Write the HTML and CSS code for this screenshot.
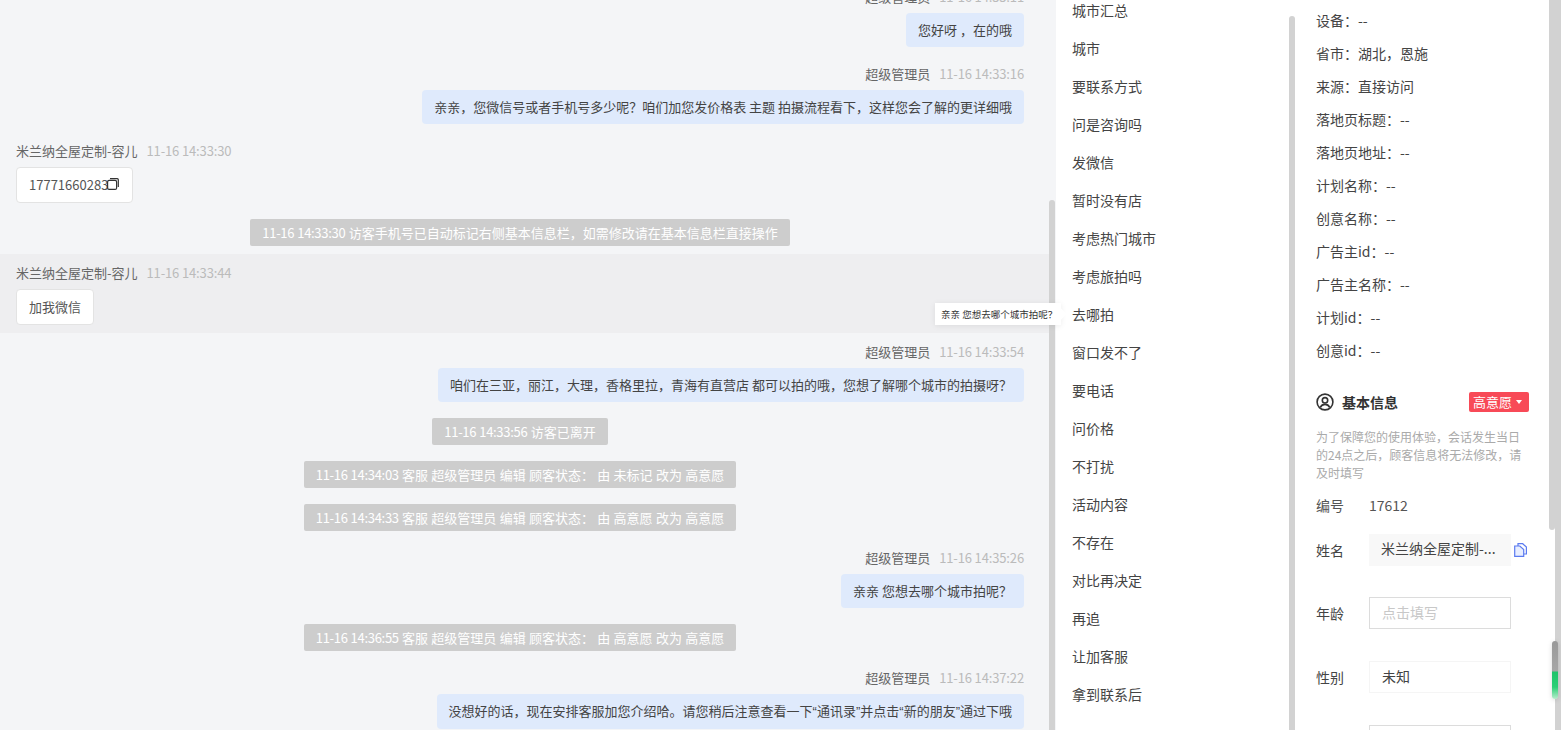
FILE: index.html
```html
<!DOCTYPE html>
<html>
<head>
  <title>会话详情</title>
  <link rel="stylesheet" href="styles.css">
</head>
<body>
  <div class="page">
    <!-- chat log -->
    <div class="chat-panel">
      <div class="chat-scroll">
        <div class="msg msg-right">
          <div class="msg-meta"><span class="msg-name">超级管理员</span><span class="msg-time">11-16 14:33:11</span></div>
          <div class="bubble bubble-blue">您好呀 ，在的哦</div>
        </div>
        <div class="msg msg-right">
          <div class="msg-meta"><span class="msg-name">超级管理员</span><span class="msg-time">11-16 14:33:16</span></div>
          <div class="bubble bubble-blue">亲亲，您微信号或者手机号多少呢？咱们加您发价格表 主题 拍摄流程看下，这样您会了解的更详细哦</div>
        </div>
        <div class="msg">
          <div class="msg-meta"><span class="msg-name">米兰纳全屋定制-容儿</span><span class="msg-time">11-16 14:33:30</span></div>
          <div class="bubble bubble-white">17771660283<svg class="copy-icon" viewBox="0 0 12 12" width="12" height="12"><path d="M3 .7h7.300a1 1 0 0 1 1 1v7.300" fill="none" stroke="#333" stroke-width="1.200"/><rect x=".6" y="2.400" width="9" height="9" rx="1.500" fill="none" stroke="#333" stroke-width="1.200"/></svg></div>
        </div>
        <div class="sys-row"><span class="sys-note"><span class="sys-time">11-16 14:33:30</span> 访客手机号已自动标记右侧基本信息栏，如需修改请在基本信息栏直接操作</span></div>
        <div class="msg msg-hover">
          <div class="msg-meta"><span class="msg-name">米兰纳全屋定制-容儿</span><span class="msg-time">11-16 14:33:44</span></div>
          <div class="bubble bubble-white">加我微信</div>
        </div>
        <div class="msg msg-right">
          <div class="msg-meta"><span class="msg-name">超级管理员</span><span class="msg-time">11-16 14:33:54</span></div>
          <div class="bubble bubble-blue">咱们在三亚，丽江，大理，香格里拉，青海有直营店 都可以拍的哦，您想了解哪个城市的拍摄呀？</div>
        </div>
        <div class="sys-row"><span class="sys-note"><span class="sys-time">11-16 14:33:56</span> 访客已离开</span></div>
        <div class="sys-row"><span class="sys-note"><span class="sys-time">11-16 14:34:03</span> 客服 超级管理员 编辑 顾客状态： 由 未标记 改为 高意愿</span></div>
        <div class="sys-row"><span class="sys-note"><span class="sys-time">11-16 14:34:33</span> 客服 超级管理员 编辑 顾客状态： 由 高意愿 改为 高意愿</span></div>
        <div class="msg msg-right">
          <div class="msg-meta"><span class="msg-name">超级管理员</span><span class="msg-time">11-16 14:35:26</span></div>
          <div class="bubble bubble-blue">亲亲 您想去哪个城市拍呢？</div>
        </div>
        <div class="sys-row"><span class="sys-note"><span class="sys-time">11-16 14:36:55</span> 客服 超级管理员 编辑 顾客状态： 由 高意愿 改为 高意愿</span></div>
        <div class="msg msg-right">
          <div class="msg-meta"><span class="msg-name">超级管理员</span><span class="msg-time">11-16 14:37:22</span></div>
          <div class="bubble bubble-blue">没想好的话，现在安排客服加您介绍哈。请您稍后注意查看一下<span class="quote">“</span>通讯录<span class="quote">”</span>并点击<span class="quote">“</span>新的朋友<span class="quote">”</span>通过下哦</div>
        </div>
      </div>
      <div class="scroll-thumb chat-thumb"></div>
      <div class="tip">亲亲 您想去哪个城市拍呢？</div>
    </div>

    <!-- quick reply tags -->
    <div class="tag-panel">
      <ul class="tag-list">
        <li>城市汇总</li>
        <li>城市</li>
        <li>要联系方式</li>
        <li>问是咨询吗</li>
        <li>发微信</li>
        <li>暂时没有店</li>
        <li>考虑热门城市</li>
        <li>考虑旅拍吗</li>
        <li>去哪拍</li>
        <li>窗口发不了</li>
        <li>要电话</li>
        <li>问价格</li>
        <li>不打扰</li>
        <li>活动内容</li>
        <li>不存在</li>
        <li>对比再决定</li>
        <li>再追</li>
        <li>让加客服</li>
        <li>拿到联系后</li>
      </ul>
      <div class="scroll-thumb tag-thumb"></div>
    </div>

    <!-- visitor info -->
    <div class="info-panel">
      <ul class="info-list">
        <li>设备：--</li>
        <li>省市：湖北，恩施</li>
        <li>来源：直接访问</li>
        <li>落地页标题：--</li>
        <li>落地页地址：--</li>
        <li>计划名称：--</li>
        <li>创意名称：--</li>
        <li>广告主id：--</li>
        <li>广告主名称：--</li>
        <li>计划id：--</li>
        <li>创意id：--</li>
      </ul>
      <div class="info-head">
        <svg class="user-icon" viewBox="0 0 18 18" width="18" height="18"><circle cx="9" cy="9" r="7.900" fill="none" stroke="#333" stroke-width="1.600"/><circle cx="9" cy="7.300" r="2.700" fill="none" stroke="#333" stroke-width="1.600"/><path d="M4.300 14.400c1-2.100 2.700-3 4.700-3s3.700.9 4.700 3" fill="none" stroke="#333" stroke-width="1.600"/></svg>
        <span class="info-title">基本信息</span>
        <span class="status-tag">高意愿<i class="caret"></i></span>
      </div>
      <p class="info-tip">为了保障您的使用体验，会话发生当日的24点之后，顾客信息将无法修改，请及时填写</p>
      <div class="field field-plain"><label>编号</label><span>17612</span></div>
      <div class="field field-name">
        <label>姓名</label>
        <div class="field-box box-grey">米兰纳全屋定制-...</div>
        <svg class="file-icon" viewBox="0 0 13 14" width="13" height="14"><path d="M4 3V.7h4.700l3.700 3.400V11H10" fill="none" stroke="#5b7bf0" stroke-width="1.200"/><path d="M.7 3h5.100l3.900 3.500v6.800H.7z" fill="#e8eeff" stroke="#5b7bf0" stroke-width="1.200"/></svg>
      </div>
      <div class="field"><label>年龄</label><div class="field-box box-input">点击填写</div></div>
      <div class="field"><label>性别</label><div class="field-box box-line">未知</div></div>
      <div class="field"><label></label><div class="field-box box-input"></div></div>
      <div class="scroll-thumb info-thumb"></div>
      <div class="page-scroll"></div>
      <div class="side-progress"></div>
    </div>
  </div>
</body>
</html>
```

FILE: styles.css
```css
html, body {
  margin: 0;
  height: 100%;
  overflow: hidden;
}
body {
  font-family: "Noto Sans CJK SC", "Noto Sans", sans-serif;
  font-size: 14px;
  color: #333;
  background-color: #fff;
}
ul {
  list-style: none;
  margin: 0;
  padding: 0;
}
.page {
  display: flex;
  height: 730px;
  overflow: hidden;
}

/* chat */
.chat-panel {
  position: relative;
  z-index: 1;
  width: 1056px;
  flex: none;
  background-color: #f4f5f7;
}
.chat-scroll {
  margin-top: -22px;
  width: 1050px;
}
.msg {
  padding: 9px 26px 8px 16px;
  display: flex;
  flex-direction: column;
  align-items: flex-start;
}
.msg-right {
  align-items: flex-end;
}
.msg-meta {
  font-size: 13px;
  line-height: 20px;
  color: #666;
  margin-bottom: 6px;
}
.msg-time {
  color: #bbb;
  margin-left: 9px;
  letter-spacing: -0.14px;
}
.bubble {
  font-size: 13px;
  line-height: 20px;
  padding: 7px 12px;
  border-radius: 4px;
  color: #444;
  white-space: nowrap;
}
.bubble-blue {
  background-color: #dfeafc;
}
.bubble-white {
  background-color: #fff;
  border: 1px solid #e3e3e3;
  color: #555;
  display: flex;
  align-items: center;
}
.quote {
  font-family: "Liberation Sans", sans-serif;
}
.copy-icon {
  flex: none;
  margin: -2px 1px 0 -1px;
}
.msg-hover {
  background-color: #eeeef0;
}
.sys-row {
  display: flex;
  justify-content: center;
  padding: 8px 10px 8px 0;
}
.sys-note {
  background-color: #cdcdcd;
  color: #fff;
  font-size: 13px;
  line-height: 27px;
  padding: 0 12px;
  border-radius: 2px;
  word-spacing: 0.4px;
}
.sys-time {
  letter-spacing: -0.3px;
}
.tip {
  position: absolute;
  left: 935px;
  top: 303px;
  height: 22px;
  line-height: 23px;
  padding: 0 4px 0 6px;
  font-size: 9.5px;
  color: #333;
  background-color: #fff;
  box-shadow: 0 1px 6px rgba(0, 0, 0, 0.08);
  white-space: nowrap;
}
.tip::after {
  content: "";
  position: absolute;
  right: -4px;
  top: 7px;
  width: 8px;
  height: 8px;
  background-color: #fff;
  transform: rotate(45deg);
}

/* scrollbars */
.scroll-thumb {
  position: absolute;
  width: 6px;
  background-color: #d2d2d2;
  border-radius: 3px 3px 0 0;
}
.chat-thumb {
  left: 1049px;
  top: 200px;
  bottom: 0;
}
.tag-thumb {
  left: 233px;
  top: 16px;
  bottom: 0;
}
.info-thumb {
  left: 253px;
  top: 0;
  height: 530px;
  border-radius: 0 0 3px 3px;
}
.page-scroll {
  position: absolute;
  left: 259px;
  top: 0;
  bottom: 0;
  width: 6px;
  background-color: #d2d2d2;
}

/* tags */
.tag-panel {
  position: relative;
  width: 240px;
  flex: none;
  background-color: #fff;
  overflow: hidden;
}
.tag-list {
  margin-top: -9px;
  padding-left: 16px;
}
.tag-list li {
  height: 38px;
  line-height: 38px;
  font-size: 14px;
  color: #444;
}

/* info */
.info-panel {
  position: relative;
  flex: 1;
  background-color: #fff;
  padding: 0 32px 0 20px;
  overflow: hidden;
}
.info-list {
  margin-top: 4px;
}
.info-list li {
  height: 33px;
  line-height: 33px;
  font-size: 14px;
  color: #444;
}
.info-head {
  display: flex;
  align-items: center;
  margin-top: 25px;
  height: 20px;
}
.user-icon {
  margin-right: 8px;
}
.info-title {
  font-size: 14px;
  font-weight: 700;
  color: #333;
}
.status-tag {
  margin-left: auto;
  background-color: #f84a57;
  color: #fff;
  font-size: 13px;
  line-height: 20px;
  padding: 0 7px 0 4px;
  border-radius: 2px;
  display: flex;
  align-items: center;
}
.caret {
  width: 0;
  height: 0;
  margin-left: 4px;
  border-left: 3px solid transparent;
  border-right: 3px solid transparent;
  border-top: 4px solid #fff;
}
.info-tip {
  margin: 16px 0 0;
  font-size: 12px;
  line-height: 18px;
  color: #aaa;
}
.field {
  display: flex;
  align-items: center;
  height: 32px;
  margin-bottom: 32px;
  font-size: 14px;
  color: #444;
}
.field-plain {
  height: 20px;
  margin: 13px 0 19px;
  color: #555;
}
.field-name {
  margin-bottom: 31px;
}
.field label {
  width: 53px;
  flex: none;
}
.field-box {
  width: 142px;
  height: 32px;
  line-height: 29px;
  box-sizing: border-box;
  padding: 0 12px;
  white-space: nowrap;
  flex: none;
}
.box-grey {
  background-color: #f8f8f8;
}
.box-input {
  border: 1px solid #dcdcdc;
  color: #c8c8c8;
}
.box-line {
  border: 1px solid #f5f5f5;
}
.file-icon {
  flex: none;
  margin-left: 3px;
}
.side-progress {
  position: absolute;
  left: 256px;
  top: 641px;
  width: 6px;
  height: 58px;
  border-radius: 3px;
  box-shadow: 0 1px 5px rgba(0, 0, 0, 0.15);
  background: linear-gradient(#999 0, #a6a6a6 30px, #1fc36a 31px, #2ccf76 46px, #b8eccd 58px);
}
```
